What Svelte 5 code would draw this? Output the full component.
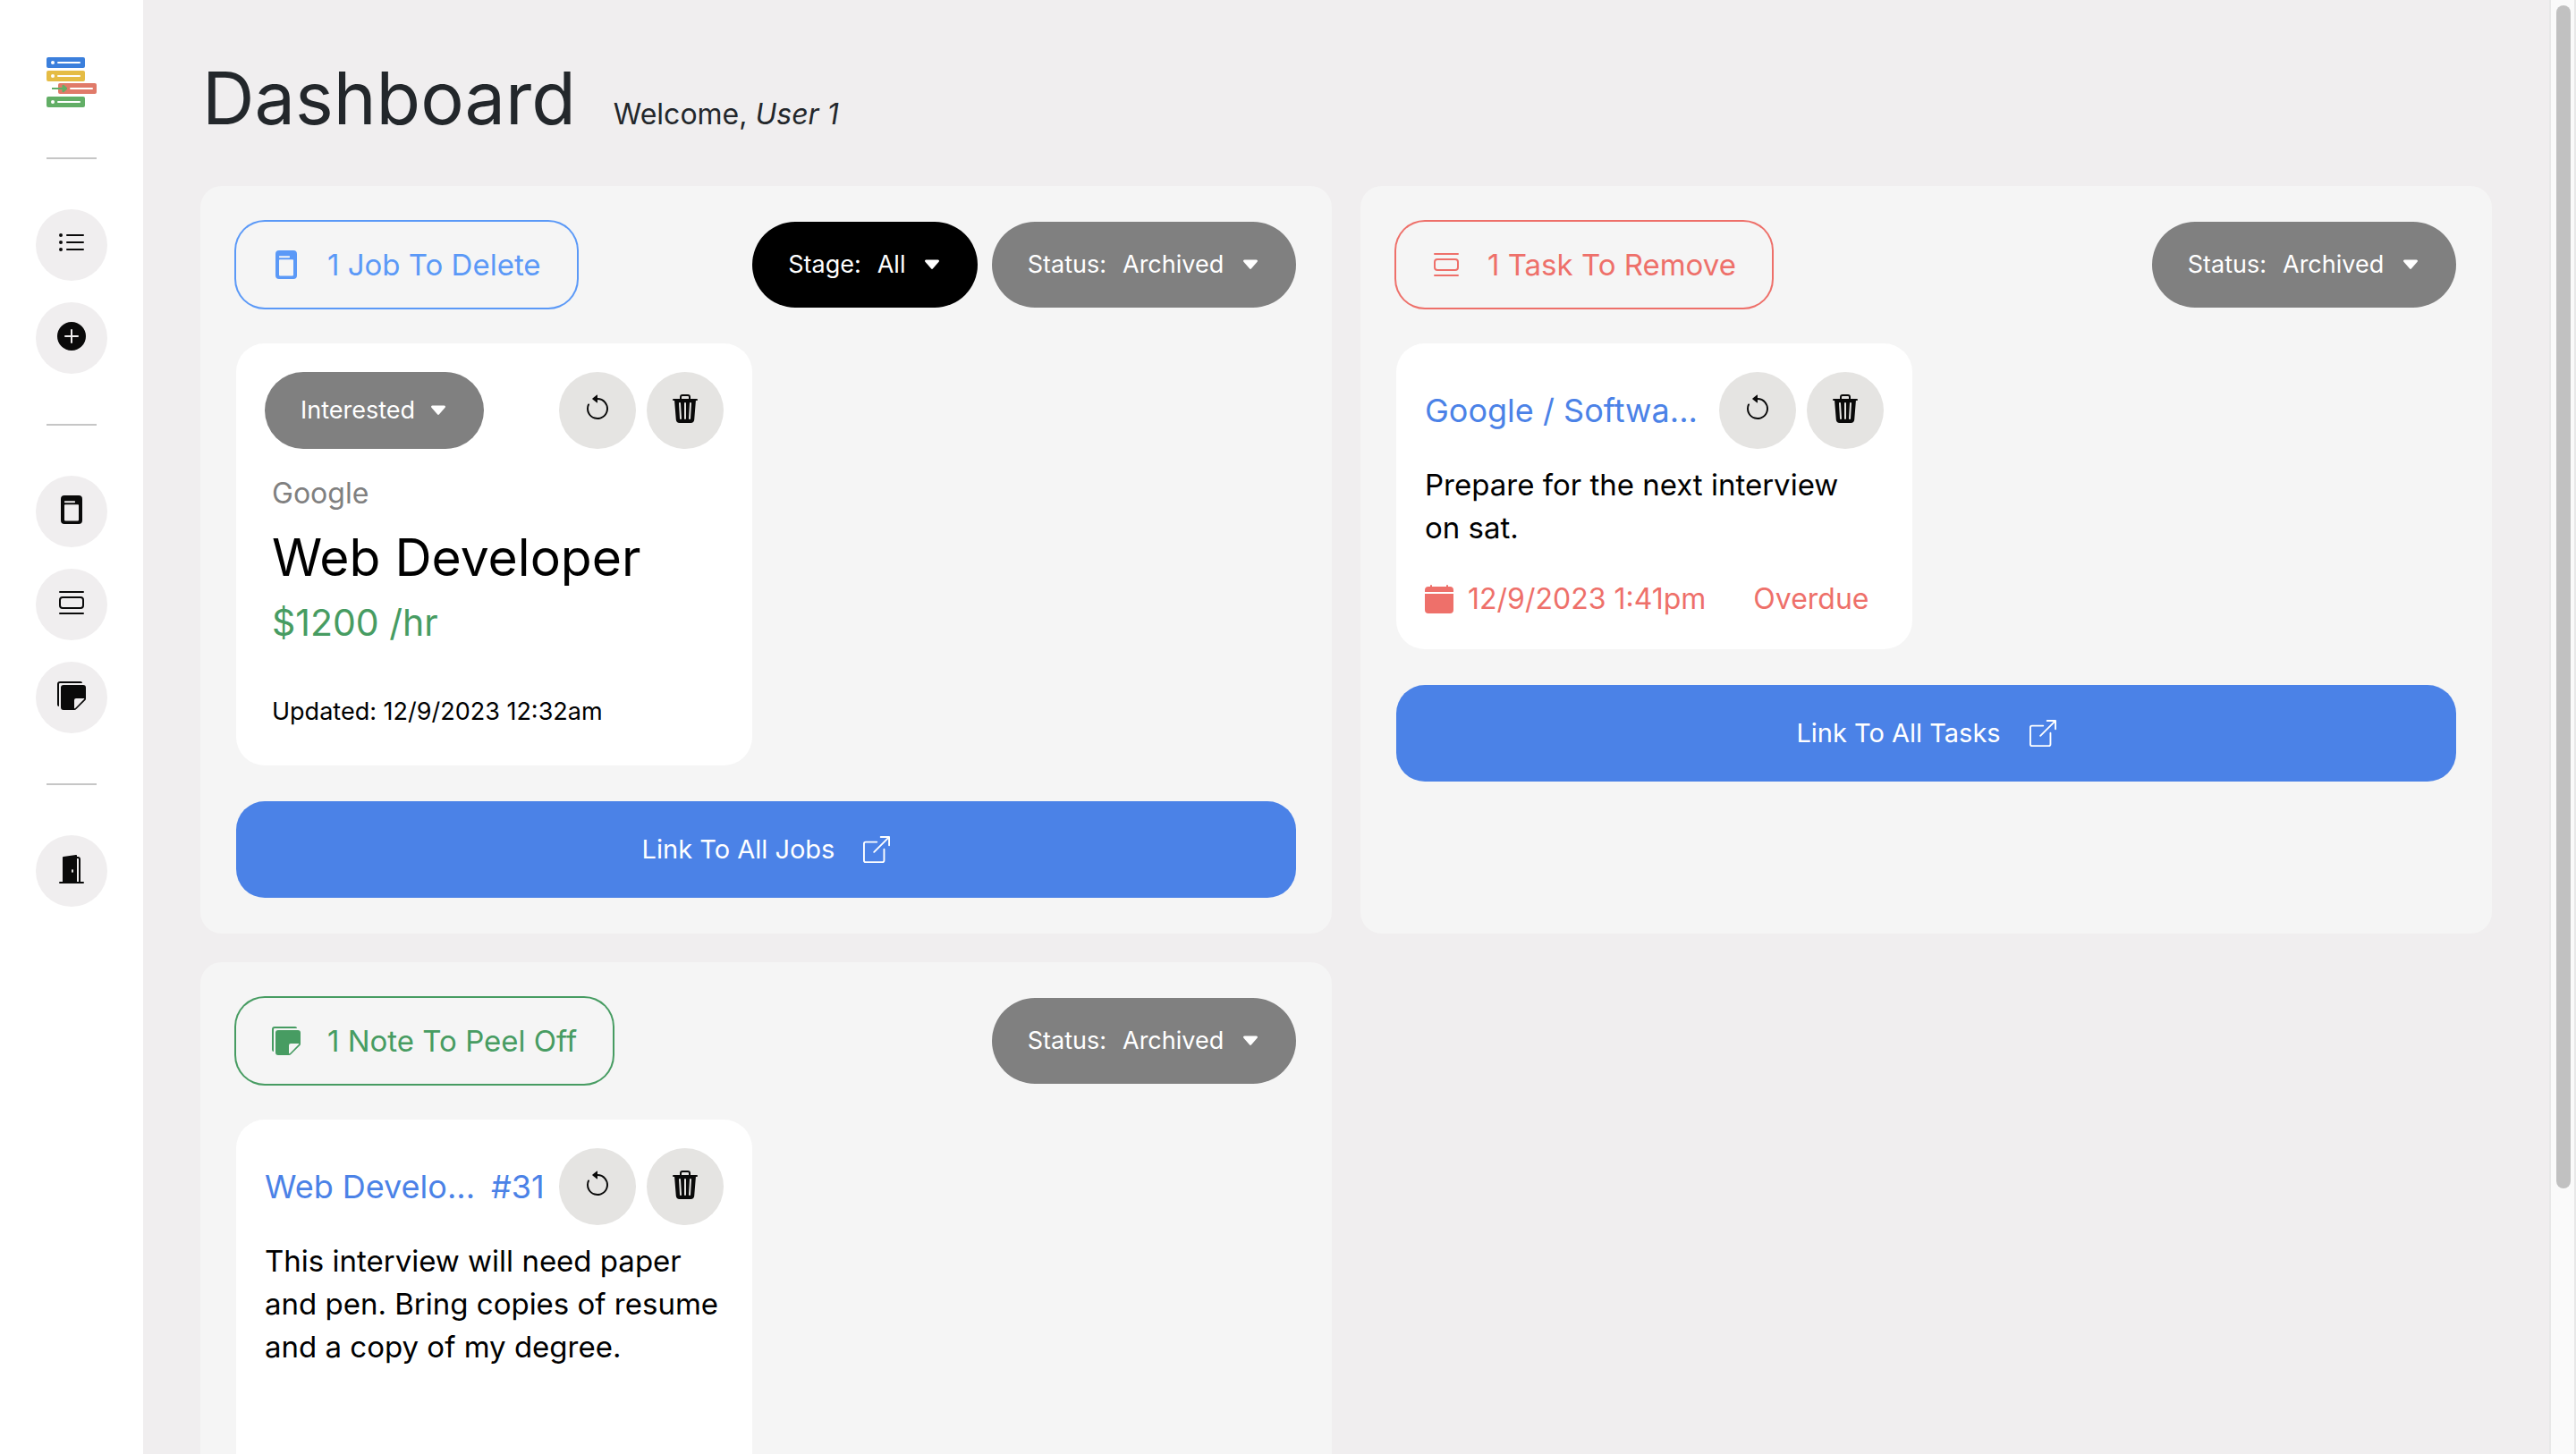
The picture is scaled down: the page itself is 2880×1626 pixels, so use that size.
<script>
  const icons = {
    list: 'M5 11.5a.5.5 0 0 1 .5-.5h9a.5.5 0 0 1 0 1h-9a.5.5 0 0 1-.5-.5zm0-4a.5.5 0 0 1 .5-.5h9a.5.5 0 0 1 0 1h-9a.5.5 0 0 1-.5-.5zm0-4a.5.5 0 0 1 .5-.5h9a.5.5 0 0 1 0 1h-9a.5.5 0 0 1-.5-.5zm-3 1a1 1 0 1 0 0-2 1 1 0 0 0 0 2zm0 4a1 1 0 1 0 0-2 1 1 0 0 0 0 2zm0 4a1 1 0 1 0 0-2 1 1 0 0 0 0 2z',
    plus: 'M16 8A8 8 0 1 1 0 8a8 8 0 0 1 16 0zM8.5 4.5a.5.5 0 0 0-1 0v3h-3a.5.5 0 0 0 0 1h3v3a.5.5 0 0 0 1 0v-3h3a.5.5 0 0 0 0-1h-3v-3z',
    job: 'M4 0h8a2 2 0 0 1 2 2v12a2 2 0 0 1-2 2H4a2 2 0 0 1-2-2V2a2 2 0 0 1 2-2zM4.3 3.1a.3.3 0 0 0-.3.3v.4a.3.3 0 0 0 .3.3h5.4a.3.3 0 0 0 .3-.3v-.4a.3.3 0 0 0-.3-.3zM4.4 5.1a.4.4 0 0 0-.4.4v8.3a.4.4 0 0 0 .4.4h7.2a.4.4 0 0 0 .4-.4V5.5a.4.4 0 0 0-.4-.4z',
    task: 'M3 4.5h10a2 2 0 0 1 2 2v3a2 2 0 0 1-2 2H3a2 2 0 0 1-2-2v-3a2 2 0 0 1 2-2zm0 1a1 1 0 0 0-1 1v3a1 1 0 0 0 1 1h10a1 1 0 0 0 1-1v-3a1 1 0 0 0-1-1H3zM1 2a.5.5 0 0 1 .5-.5h13a.5.5 0 0 1 0 1h-13A.5.5 0 0 1 1 2zm0 12a.5.5 0 0 1 .5-.5h13a.5.5 0 0 1 0 1h-13A.5.5 0 0 1 1 14z',
    note: 'M0 1.5V13a1 1 0 0 0 1 1V1.5a.5.5 0 0 1 .5-.5H14a1 1 0 0 0-1-1H1.5A1.5 1.5 0 0 0 0 1.5zM3.5 2A1.5 1.5 0 0 0 2 3.5v11A1.5 1.5 0 0 0 3.5 16h6.086a1.5 1.5 0 0 0 1.06-.44l4.915-4.914A1.5 1.5 0 0 0 16 9.586V3.5A1.5 1.5 0 0 0 14.5 2h-11zm6 8.5a1 1 0 0 1 1-1h4.396a.25.25 0 0 1 .177.427l-5.146 5.146a.25.25 0 0 1-.427-.177V10.5z',
    door: 'M1.5 15a.5.5 0 0 0 0 1h13a.5.5 0 0 0 0-1H13V2.5A1.5 1.5 0 0 0 11.5 1H11V.5a.5.5 0 0 0-.57-.495l-7 1A.5.5 0 0 0 3 1.5V15H1.5zM11 2h.5a.5.5 0 0 1 .5.5V15h-1V2zm-2.5 8c-.276 0-.5-.448-.5-1s.224-1 .5-1 .5.448.5 1-.224 1-.5 1z',
    restore: 'M8 3a5 5 0 1 1-4.546 2.914.5.5 0 0 0-.908-.417A6 6 0 1 0 8 2v1zM8 4.466V.534a.25.25 0 0 0-.41-.192L5.23 2.308a.25.25 0 0 0 0 .384l2.36 1.966A.25.25 0 0 0 8 4.466z',
    trash: 'M11 1.5v1h3.5a.5.5 0 0 1 0 1h-.538l-.853 10.66A2 2 0 0 1 11.115 16h-6.23a2 2 0 0 1-1.994-1.84L2.038 3.5H1.5a.5.5 0 0 1 0-1H5v-1A1.5 1.5 0 0 1 6.5 0h3A1.5 1.5 0 0 1 11 1.5Zm-5 0v1h4v-1a.5.5 0 0 0-.5-.5h-3a.5.5 0 0 0-.5.5ZM4.5 5.029l.5 8.5a.5.5 0 1 0 .998-.06l-.5-8.5a.5.5 0 1 0-.998.06Zm6.53-.528a.5.5 0 0 0-.528.47l-.5 8.5a.5.5 0 0 0 .998.058l.5-8.5a.5.5 0 0 0-.47-.528ZM8 4.5a.5.5 0 0 0-.5.5v8.5a.5.5 0 0 0 1 0V5a.5.5 0 0 0-.5-.5Z',
    open: 'M8.636 3.5a.5.5 0 0 0-.5-.5H1.5A1.5 1.5 0 0 0 0 4.5v10A1.5 1.5 0 0 0 1.5 16h10a1.5 1.5 0 0 0 1.5-1.5V7.864a.5.5 0 0 0-1 0V14.5a.5.5 0 0 1-.5.5h-10a.5.5 0 0 1-.5-.5v-10a.5.5 0 0 1 .5-.5h6.636a.5.5 0 0 0 .5-.5zM16 .5a.5.5 0 0 0-.5-.5h-5a.5.5 0 0 0 0 1h3.793L6.146 9.146a.5.5 0 1 0 .708.708L15 1.707V5.5a.5.5 0 0 0 1 0v-5z',
    calendar: 'M3.5 0a.5.5 0 0 1 .5.5V1h8V.5a.5.5 0 0 1 1 0V1h1a2 2 0 0 1 2 2v11a2 2 0 0 1-2 2H2a2 2 0 0 1-2-2V5h16V4H0V3a2 2 0 0 1 2-2h1V.5a.5.5 0 0 1 .5-.5z',
    caret: 'M7.247 11.14 2.451 5.658C1.885 5.013 2.345 4 3.204 4h9.592a1 1 0 0 1 .753 1.659l-4.796 5.48a1 1 0 0 1-1.506 0z'
  };

  const navGroups = [
    [
      { icon: 'list', label: 'Dashboard' },
      { icon: 'plus', label: 'Add job' }
    ],
    [
      { icon: 'job', label: 'Jobs' },
      { icon: 'task', label: 'Tasks' },
      { icon: 'note', label: 'Notes' }
    ],
    [{ icon: 'door', label: 'Log out' }]
  ];
</script>

{#snippet icon(name)}
  <svg class="icon {name}" viewBox="0 0 16 16" fill="currentColor" aria-hidden="true">
    <path fill-rule={name === 'job' ? 'evenodd' : 'nonzero'} d={icons[name]} />
  </svg>
{/snippet}

{#snippet filter(name, value, tone)}
  <label class="pill {tone}">
    <span>{name}:</span>
    <select>
      <option>{value}</option>
    </select>
    {@render icon('caret')}
  </label>
{/snippet}

{#snippet actions()}
  <div class="actions">
    <button type="button" aria-label="Restore">{@render icon('restore')}</button>
    <button type="button" aria-label="Delete">{@render icon('trash')}</button>
  </div>
{/snippet}

<div class="shell">
  <nav class="sidebar" aria-label="Main">
    <a class="logo" href="#home" aria-label="Home">
      <svg viewBox="0 0 56 56" aria-hidden="true">
        <rect x="0" y="0" width="43" height="12" rx="2" fill="#3b7fdc" />
        <rect x="0" y="15" width="43" height="12" rx="2" fill="#e5bc45" />
        <rect x="13" y="29" width="43" height="12" rx="2" fill="#e07a69" />
        <rect x="0" y="44" width="43" height="12" rx="2" fill="#62ae66" />
        <g fill="#fff">
          <circle cx="7" cy="6" r="2" />
          <circle cx="7" cy="21" r="2" />
          <circle cx="7" cy="50" r="2" />
          <rect x="12" y="5" width="26" height="2" rx="1" />
          <rect x="12" y="20" width="26" height="2" rx="1" />
          <rect x="26" y="34" width="26" height="2" rx="1" />
          <rect x="12" y="49" width="26" height="2" rx="1" />
        </g>
        <path d="M6 34h11.500v-2.500q1-1.500 2.500 0l3 2.800v1.400l-3 2.800q-1.500 1.500-2.500 0V36H6z" fill="#62ae66" />
      </svg>
    </a>
    {#each navGroups as group}
      <hr />
      <ul>
        {#each group as item}
          <li><a href="#{item.icon}" aria-label={item.label}>{@render icon(item.icon)}</a></li>
        {/each}
      </ul>
    {/each}
  </nav>

  <main>
    <header>
      <h1>Dashboard</h1>
      <p>Welcome, <em>User 1</em></p>
    </header>

    <div class="panels">
      <section class="panel">
        <div class="head">
          <h2 class="badge blue">{@render icon('job')}1 Job To Delete</h2>
          <div class="filters">
            {@render filter('Stage', 'All', 'dark')}
            {@render filter('Status', 'Archived', 'grey')}
          </div>
        </div>
        <div class="cards">
          <article class="card job-card">
            <div class="top">
              <label class="pill grey small">
                <select aria-label="Stage">
                  <option>Interested</option>
                </select>
                {@render icon('caret')}
              </label>
              {@render actions()}
            </div>
            <div class="details">
              <p class="company">Google</p>
              <h3>Web Developer</h3>
              <p class="salary">$1200 /hr</p>
              <p class="updated">Updated: 12/9/2023 12:32am</p>
            </div>
          </article>
        </div>
        <a class="all" href="#jobs">Link To All Jobs {@render icon('open')}</a>
      </section>

      <section class="panel">
        <div class="head">
          <h2 class="badge red">{@render icon('task')}1 Task To Remove</h2>
          <div class="filters">{@render filter('Status', 'Archived', 'grey')}</div>
        </div>
        <div class="cards">
          <article class="card">
            <div class="top">
              <a class="title" href="#task">Google / Softwa...</a>
              {@render actions()}
            </div>
            <p class="text">Prepare for the next interview on sat.</p>
            <div class="due">
              <span>{@render icon('calendar')}12/9/2023 1:41pm</span>
              <span>Overdue</span>
            </div>
          </article>
        </div>
        <a class="all" href="#tasks">Link To All Tasks {@render icon('open')}</a>
      </section>

      <section class="panel">
        <div class="head">
          <h2 class="badge green">{@render icon('note')}1 Note To Peel Off</h2>
          <div class="filters">{@render filter('Status', 'Archived', 'grey')}</div>
        </div>
        <div class="cards">
          <article class="card note-card">
            <div class="top">
              <a class="title" href="#note"><span>Web Develo...</span><span>#31</span></a>
              {@render actions()}
            </div>
            <p class="text">This interview will need paper and pen. Bring copies of resume and a copy of my degree.</p>
          </article>
        </div>
      </section>
    </div>
  </main>

  <div class="scrollbar" aria-hidden="true"><div class="thumb"></div></div>
</div>

<style>
  :global(body) {
    background: #f0eeef;
  }
  .shell {
    display: flex;
    height: 100vh;
    overflow: hidden;
    font: 400 32px/48px Inter, 'Liberation Sans', sans-serif;
    color: #000;
  }
  h1,
  h2,
  h3,
  p,
  ul {
    margin: 0;
    padding: 0;
    font-weight: 400;
  }
  a {
    color: inherit;
    text-decoration: none;
  }
  .icon {
    display: block;
    flex: none;
    width: 32px;
    height: 32px;
  }

  .sidebar {
    box-sizing: border-box;
    flex: none;
    display: flex;
    flex-direction: column;
    align-items: center;
    width: 160px;
    padding-top: 64px;
    background: #fff;
    color: #0a0a0a;
  }
  .logo svg {
    display: block;
    width: 56px;
    height: 56px;
  }
  .sidebar hr {
    width: 56px;
    height: 2px;
    margin: 56px 0;
    border: 0;
    background: #c6c6c6;
  }
  .sidebar ul {
    display: flex;
    flex-direction: column;
    gap: 24px;
    list-style: none;
  }
  .sidebar li a {
    box-sizing: border-box;
    display: flex;
    align-items: center;
    justify-content: center;
    width: 80px;
    height: 80px;
    padding-bottom: 4px;
    border-radius: 50%;
    background: #f0eeef;
  }

  main {
    flex: 1;
    min-width: 0;
    padding: 64px 64px 0;
  }
  header {
    display: flex;
    align-items: baseline;
    gap: 42px;
    margin-bottom: 52px;
    padding-left: 2px;
    color: #23272b;
  }
  h1 {
    font-size: 81px;
    line-height: 92px;
  }
  .panels {
    display: grid;
    grid-template-columns: 1fr 1fr;
    gap: 32px;
  }
  .panel {
    display: flex;
    flex-direction: column;
    gap: 40px;
    padding: 40px;
    border-radius: 24px;
    background: #f5f5f5;
  }
  .head {
    display: flex;
    justify-content: space-between;
  }
  .badge {
    display: flex;
    align-items: center;
    gap: 30px;
    height: 96px;
    padding: 0 40px;
    border-radius: 32px;
    box-shadow: 0 0 0 2px currentColor;
    font-size: 33px;
  }
  .blue {
    color: #5b99f7;
  }
  .red {
    color: #ee706a;
  }
  .green {
    color: #479c62;
  }
  .filters {
    display: flex;
    gap: 16px;
  }
  .pill {
    display: flex;
    align-items: center;
    gap: 18px;
    height: 96px;
    padding: 0 40px;
    border-radius: 48px;
    color: #fff;
    font-size: 27px;
  }
  .pill.small {
    gap: 14px;
    height: 86px;
  }
  .dark {
    background: #000;
  }
  .grey {
    background: #808080;
  }
  .pill select {
    appearance: none;
    padding: 0;
    border: 0;
    background: none;
    color: inherit;
    font: inherit;
  }
  .icon.caret {
    width: 22px;
    height: 22px;
  }

  .cards {
    display: grid;
    grid-template-columns: 1fr 1fr;
    gap: 32px;
  }
  .card {
    padding: 32px;
    border-radius: 32px;
    background: #fff;
  }
  .top {
    display: flex;
    align-items: center;
    justify-content: space-between;
    margin-bottom: 16px;
  }
  .title {
    display: flex;
    gap: 18px;
    color: #4b82e7;
    font-size: 36px;
    white-space: nowrap;
  }
  .actions {
    display: flex;
    gap: 12px;
  }
  .actions button {
    display: flex;
    align-items: center;
    justify-content: center;
    width: 86px;
    height: 86px;
    padding: 0 0 4px;
    border: 0;
    border-radius: 50%;
    background: #e5e4e2;
    color: #0a0a0a;
  }
  .text {
    padding-right: 4px;
    font-size: 33px;
  }
  .job-card {
    padding-bottom: 40px;
  }
  .details {
    display: flex;
    flex-direction: column;
    gap: 16px;
    padding: 10px 8px 0;
  }
  .company {
    color: #808080;
  }
  h3 {
    font-size: 57px;
    line-height: 64px;
  }
  .salary {
    color: #479c62;
    font-size: 41px;
  }
  .updated {
    margin-top: 40px;
    font-size: 27px;
    line-height: 40px;
  }
  .due {
    display: flex;
    justify-content: space-between;
    margin-top: 32px;
    padding-right: 16px;
    color: #ee706a;
  }
  .due span {
    display: flex;
    align-items: center;
    gap: 16px;
  }
  .note-card {
    min-height: 440px;
  }
  .all {
    display: flex;
    align-items: center;
    justify-content: center;
    gap: 32px;
    height: 108px;
    border-radius: 32px;
    background: #4b82e7;
    color: #fff;
    font-size: 29px;
  }
  .icon.open {
    width: 30px;
    height: 30px;
  }

  .scrollbar {
    box-sizing: border-box;
    flex: none;
    width: 30px;
    padding: 6px;
    border: solid #e8e8e8;
    border-width: 0 2px;
    background: #fafafa;
  }
  .thumb {
    width: 16px;
    height: 82%;
    border-radius: 8px;
    background: #c1c1c1;
  }
</style>
